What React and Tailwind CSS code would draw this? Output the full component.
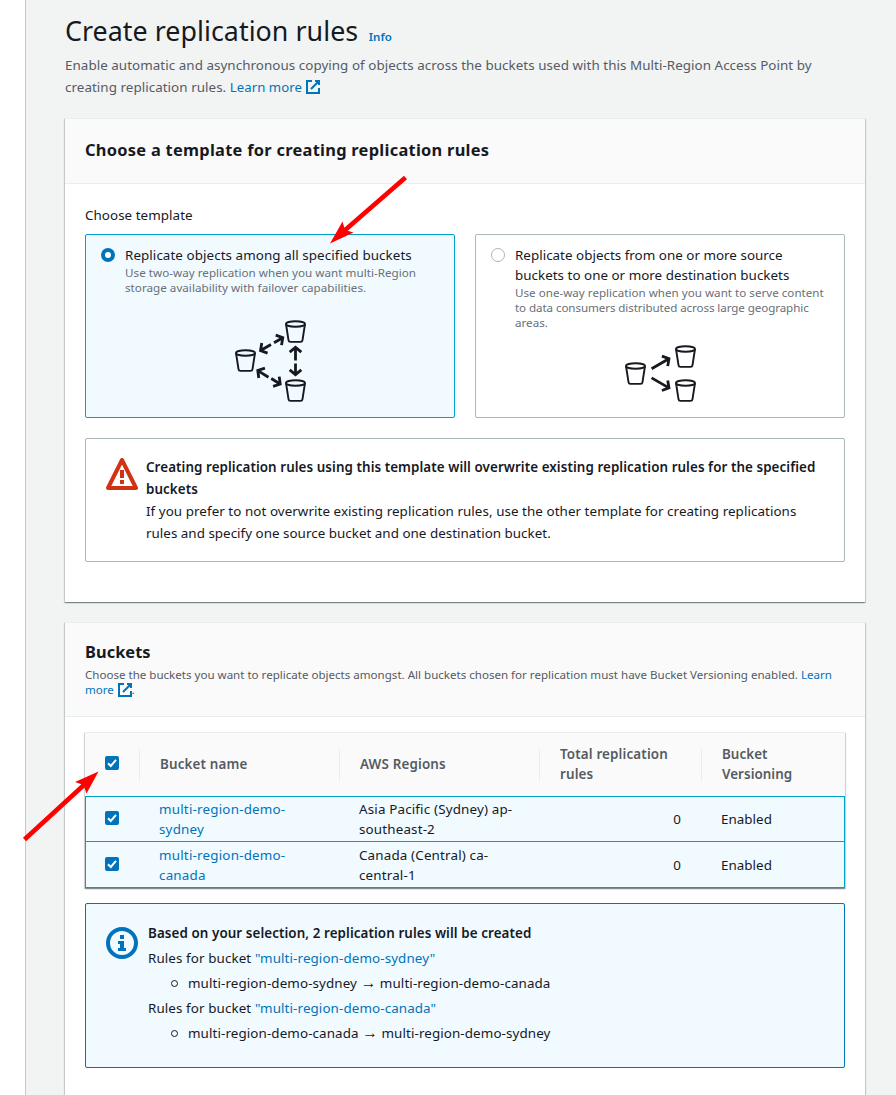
const CARD =
  "rounded-none border-t border-[#eaeded] bg-white shadow-[0_1px_1px_0_rgba(0,28,36,0.3),1px_1px_1px_0_rgba(0,28,36,0.15),-1px_1px_1px_0_rgba(0,28,36,0.15)]";

function ExternalIcon({ className }) {
  return (
    <svg viewBox="0 0 16 16" className={className} fill="none" stroke="#0073bb" strokeWidth="2">
      <path d="M10 2h4v4M6 10l8-8M14 9.048V14H2V2h5" />
    </svg>
  );
}

function WarningIcon() {
  return (
    <svg viewBox="0 0 16 16" className="mt-[2px] size-8 shrink-0" fill="none">
      <path d="M8 1l7 14H1L8 1z" stroke="#d13212" strokeWidth="2" strokeLinejoin="round" />
      <path d="M7 6h2v4H7zM7 11h2v2H7z" fill="#d13212" />
    </svg>
  );
}

function InfoIcon() {
  return (
    <svg viewBox="0 0 16 16" className="mt-[5px] size-8 shrink-0" fill="none">
      <circle cx="8" cy="8" r="7" stroke="#0073bb" strokeWidth="2" />
      <path d="M7 4h2v2H7zM6 7h3v3.5h1V12H6v-1.5h1v-2H6z" fill="#0073bb" />
    </svg>
  );
}

function Bucket({ x, y }) {
  return (
    <g transform={`translate(${x} ${y})`} fill="none" stroke="#16191f" strokeWidth="1.9" strokeLinejoin="round">
      <ellipse cx="0" cy="4" rx="9.5" ry="2.8" />
      <path d="M-9.5 4L-7 20.2Q-6.8 21.9 -5 21.9H5Q6.8 21.9 7 20.2L9.5 4" />
    </g>
  );
}

/* Arrow pointing right from the origin, turned and moved into place. */
function Arrow({ x, y, angle, length }) {
  return (
    <g transform={`translate(${x} ${y}) rotate(${angle})`} fill="none" stroke="#16191f" strokeWidth="2.8">
      <path d={`M${-length} 0H-1.5M-6.2 -5.8L-1.4 0L-6.2 5.8`} strokeLinejoin="miter" />
    </g>
  );
}

function TwoWayDiagram() {
  return (
    <svg viewBox="235 319 71 84" className="mx-auto mt-6 h-[84px] w-[71px]">
      <Bucket x={245.5} y={349} />
      <Bucket x={295.5} y={320} />
      <Bucket x={295.5} y={379} />
      <Arrow x={284} y={337} angle={-30} length={11.5} />
      <Arrow x={259.3} y={351.2} angle={150} length={13.5} />
      <Arrow x={295.5} y={346} angle={-90} length={14.5} />
      <Arrow x={295.5} y={376} angle={90} length={12.5} />
      <Arrow x={256.6} y={369.8} angle={-148} length={14} />
      <Arrow x={281.4} y={384.8} angle={32} length={12} />
    </svg>
  );
}

function OneWayDiagram() {
  return (
    <svg viewBox="625 344 71 59" className="mx-auto mt-3.5 h-[59px] w-[71px]">
      <Bucket x={635.5} y={362} />
      <Bucket x={685.5} y={345} />
      <Bucket x={685.5} y={379} />
      <Arrow x={670.2} y={358} angle={-30} length={21.5} />
      <Arrow x={670.2} y={388.6} angle={30} length={21.5} />
    </svg>
  );
}

function Checkbox() {
  return (
    <svg viewBox="0 0 14 14" className="size-3.5 shrink-0">
      <rect width="14" height="14" rx="2" fill="#0073bb" />
      <path d="M3 7.2L5.8 10L11 3.8" fill="none" stroke="#fff" strokeWidth="2" />
    </svg>
  );
}

const ROWS = [
  { name: ["multi-region-demo-", "sydney"], region: ["Asia Pacific (Sydney) ap-", "southeast-2"], border: "border-y pt-[2px]" },
  { name: ["multi-region-demo-", "canada"], region: ["Canada (Central) ca-", "central-1"], border: "border-b pt-[3px]" },
];

const COLS = "grid grid-cols-[55px_200px_200px_162px_143px]";

function Rule({ from, to }) {
  return (
    <>
      <div>
        Rules for bucket <span className="text-[#0073bb]">"{from}"</span>
      </div>
      <div className="flex items-center">
        <span className="ml-[23px] mr-[10px] size-[7px] rounded-full border border-[#16191f]" />
        <span>
          {from} <span className="text-[15.5px] leading-none">→</span> {to}
        </span>
      </div>
    </>
  );
}

export default function App() {
  return (
    <div className="relative flex h-[1095px] w-[896px] overflow-hidden bg-white font-['Noto_Sans','Open_Sans',sans-serif] text-[13.4px] leading-[22px] tracking-[0.05px] whitespace-nowrap text-[#16191f]">
      <main className="ml-[25px] flex-1 border-l border-[#c3c9ca] bg-[#f2f3f3] pl-[39px]">
        <header className="h-[118px] pt-[13px]">
          <div className="flex items-baseline">
            <h1 className="text-[26.8px] leading-9">Create replication rules</h1>
            <span className="ml-[10.5px] text-[11.5px] font-semibold text-[#0073bb]">Info</span>
          </div>
          <div className="mt-[5px] text-[#545b64]">
            Enable automatic and asynchronous copying of objects across the buckets used with this Multi-Region Access Point by
            <div className="flex items-center">
              creating replication rules.<span className="ml-[3.5px] text-[13.2px] text-[#0073bb]">Learn more</span>
              <ExternalIcon className="ml-[3px] size-4" />
            </div>
          </div>
        </header>

        <section className={`${CARD} h-[484px] w-[800px]`}>
          <div className="h-[65px] border-b border-[#eaeded] bg-[#fafafa] px-5 pt-5">
            <h2 className="text-[16.4px] font-bold tracking-[0.28px]">Choose a template for creating replication rules</h2>
          </div>
          <div className="p-5">
            <div>Choose template</div>
            <div className="mt-2 grid grid-cols-2 gap-5">
              <div className="h-[184px] rounded-[2px] border border-[#00a1c9] bg-[#f1faff] pt-[10px]">
                <div className="flex pl-[15px]">
                  <span className="mt-[3px] mr-[10px] size-3.5 shrink-0 rounded-full border-4 border-[#0073bb] bg-white" />
                  <div>
                    <div className="leading-5 tracking-[0.07px]">Replicate objects among all specified buckets</div>
                    <div className="text-[11.65px] leading-[15px] tracking-[0.02px] text-[#687078]">
                      Use two-way replication when you want multi-Region
                      <br />
                      storage availability with failover capabilities.
                    </div>
                  </div>
                </div>
                <TwoWayDiagram />
              </div>
              <div className="h-[184px] rounded-[2px] border border-[#aab7b8] bg-white pt-[10px]">
                <div className="flex pl-[15px]">
                  <span className="mt-[3px] mr-[10px] size-3.5 shrink-0 rounded-full border border-[#aab7b8] bg-white" />
                  <div>
                    <div className="leading-5 tracking-[0.02px]">
                      Replicate objects from one or more source
                      <br />
                      buckets to one or more destination buckets
                    </div>
                    <div className="text-[11.6px] leading-[15px] tracking-[0.02px] text-[#687078]">
                      Use one-way replication when you want to serve content
                      <br />
                      <span className="tracking-[-0.08px]">to data consumers distributed across large geographic</span>
                      <br />
                      areas.
                    </div>
                  </div>
                </div>
                <OneWayDiagram />
              </div>
            </div>
            <div className="mt-5 flex h-[124px] gap-2 rounded-[2px] border border-[#aab7b8] py-[17px] pl-5">
              <WarningIcon />
              <div>
                <div className="font-semibold tracking-[0.07px]">
                  Creating replication rules using this template will overwrite existing replication rules for the specified
                  <br />
                  buckets
                </div>
                <span className="tracking-[0.06px]">
                  If you prefer to not overwrite existing replication rules, use the other template for creating replications
                </span>
                <br />
                <span className="tracking-[0.02px]">rules and specify one source bucket and one destination bucket.</span>
              </div>
            </div>
          </div>
        </section>

        <section className={`${CARD} mt-5 h-[600px] w-[800px]`}>
          <div className="h-[94px] border-b border-[#eaeded] bg-[#fafafa] px-5 pt-[18px]">
            <h2 className="text-[16.4px] font-bold tracking-[0.05px]">Buckets</h2>
            <div className="mt-[4px] text-[11.55px] leading-[15px] tracking-[0.005px] text-[#545b64]">
              Choose the buckets you want to replicate objects amongst. All buckets chosen for replication must have Bucket
              Versioning enabled. <span className="text-[#0073bb]">Learn</span>
              <div className="flex h-[15px] items-center">
                <span className="text-[#0073bb]">more</span>
                <ExternalIcon className="ml-[3px] size-4" />
                <span className="-ml-px">.</span>
              </div>
            </div>
          </div>
          <div className="px-5 pt-[15px]">
            <div className={`${CARD} w-[760px]`}>
              <div className={`${COLS} h-[63px] items-center bg-[#fafafa] leading-5 font-semibold tracking-[0.15px] text-[#545b64]`}>
                <div className="flex h-8 items-center border-r border-[#eaeded] pb-[3px] pl-5">
                  <Checkbox />
                </div>
                <div className="flex h-8 items-center border-r border-[#eaeded] pb-px pl-5">Bucket name</div>
                <div className="flex h-8 items-center border-r border-[#eaeded] pb-px pl-5">AWS Regions</div>
                <div className="flex h-8 items-center border-r border-[#eaeded] pb-px pl-5">
                  <div>
                    Total replication
                    <br />
                    rules
                  </div>
                </div>
                <div className="flex h-8 items-center pb-px pl-5 tracking-[0.05px]">
                  <div>
                    Bucket
                    <br />
                    Versioning
                  </div>
                </div>
              </div>
              {ROWS.map((r) => (
                <div
                  key={r.name[1]}
                  className={`${COLS} ${r.border} h-[46px] border-x border-x-[#00a1c9] border-y-[#00a1c9] bg-[#f1faff] leading-5 tracking-[0.2px]`}
                >
                  <div className="pt-3 pl-[19px]">
                    <Checkbox />
                  </div>
                  <div className="pl-[18px] text-[#0073bb]">
                    {r.name[0]}
                    <br />
                    {r.name[1]}
                  </div>
                  <div className="pl-[18px] tracking-[0.16px]">
                    {r.region[0]}
                    <br />
                    {r.region[1]}
                  </div>
                  <div className="pt-[10px] pr-[22px] text-right">0</div>
                  <div className="pt-[10px] pl-[18px] tracking-[0.03px]">Enabled</div>
                </div>
              ))}
            </div>
            <div className="mt-[15px] flex h-[165px] gap-[10px] rounded-[2px] border border-[#0073bb] bg-[#f1faff] pt-[18px] pl-5">
              <InfoIcon />
              <div className="flex flex-col gap-[3px] tracking-[0.1px]">
                <div className="font-semibold tracking-[0.08px]">Based on your selection, 2 replication rules will be created</div>
                <Rule from="multi-region-demo-sydney" to="multi-region-demo-canada" />
                <Rule from="multi-region-demo-canada" to="multi-region-demo-sydney" />
              </div>
            </div>
          </div>
        </section>
      </main>

      {/* Red pointer arrows laid over the page */}
      <svg viewBox="0 0 896 1095" className="pointer-events-none absolute inset-0 h-[1095px] w-[896px]">
        <g stroke="#ff0000" strokeWidth="4.6">
          <path d="M405.5 177.5L344 231" />
          <path d="M24.5 839.5L85 784" />
        </g>
        <g fill="#ff0000">
          <path d="M330 243.5L342.5 221.5L345 230L353.5 232.5Z" />
          <path d="M98.5 771.5L75 782L83.5 785L86.5 793.5Z" />
        </g>
      </svg>
    </div>
  );
}
